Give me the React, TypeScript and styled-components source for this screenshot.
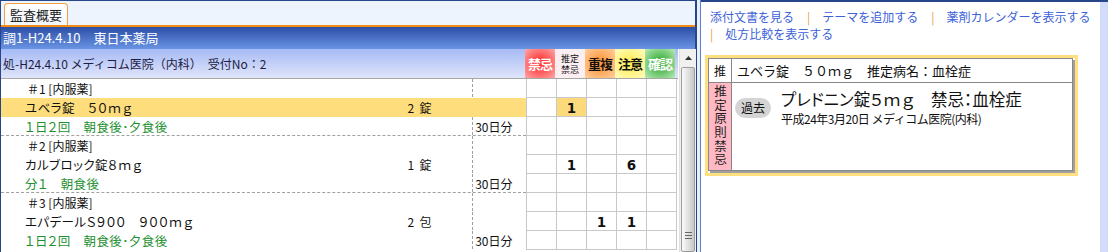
import styled, { createGlobalStyle } from "styled-components";

const GlobalStyle = createGlobalStyle`
  html, body { margin: 0; padding: 0; background: #fff; }
  body { font-family: "Noto Sans CJK JP", "Noto Sans", sans-serif; font-size: 12px; color: #111; }
`;

const Page = styled.div`
  display: flex;
  width: 1108px;
  height: 252px;
  overflow: hidden;
`;

const LeftPanel = styled.div`
  width: 694px;
  flex: none;
  display: flex;
  flex-direction: column;
  border: 1px solid #27468a;
  border-bottom: none;
  border-right-width: 2px;
  background: #fff;
`;

const TabStrip = styled.div`
  height: 24px;
  flex: none;
  display: flex;
  align-items: flex-end;
  padding-left: 3px;
  background: #eef4fd;
  border-bottom: 2px solid #f08c10;
`;

const Tab = styled.div`
  height: 21px;
  padding: 0 5px;
  line-height: 21px;
  font-size: 13px;
  color: #222;
  border: 1px solid #f0a040;
  border-bottom: none;
  border-radius: 4px 4px 0 0;
  background: linear-gradient(#ffffff, #f2f6fd);
`;

const TitleBar = styled.div`
  height: 22px;
  flex: none;
  padding-left: 2px;
  line-height: 22px;
  font-size: 13px;
  color: #fff;
  background: linear-gradient(#2c4ea6, #6a94e4);
`;

const Body = styled.div`
  flex: 1;
  display: flex;
  min-height: 0;
`;

const Content = styled.div`
  width: 677px;
  flex: none;
  display: flex;
  flex-direction: column;
`;

const SubHeader = styled.div`
  height: 29px;
  flex: none;
  display: flex;
  border-bottom: 1px solid #a8a8a8;
  background: linear-gradient(#a6baf5, #e0e5fa);
`;

const SubTitle = styled.div`
  width: 522px;
  padding-left: 2px;
  line-height: 29px;
  font-size: 12px;
  color: #1c1c44;
`;

const kinds: Record<string, { bg: string; color: string }> = {
  kinki: { bg: "radial-gradient(circle, #ff3c3c 20%, #ffa8a8 100%)", color: "#fff" },
  suitei: { bg: "#fdeef2", color: "#111" },
  jufuku: { bg: "radial-gradient(circle, #ff9a40 20%, #ffd0a0 100%)", color: "#111" },
  chui: { bg: "radial-gradient(circle, #fff060 20%, #fffcc0 100%)", color: "#111" },
  kakunin: { bg: "radial-gradient(circle, #40b040 20%, #b8ecb8 100%)", color: "#fff" },
};

const HeadCell = styled.div<{ $kind: string }>`
  width: 30px;
  display: flex;
  align-items: center;
  justify-content: center;
  text-align: center;
  font-size: ${(p) => (p.$kind === "suitei" ? "9px" : "13px")};
  line-height: ${(p) => (p.$kind === "suitei" ? "11px" : "14px")};
  font-weight: ${(p) => (p.$kind === "suitei" ? 400 : 700)};
  letter-spacing: ${(p) => (p.$kind === "suitei" ? "0" : "-1px")};
  color: ${(p) => kinds[p.$kind].color};
  background: ${(p) => kinds[p.$kind].bg};
`;

const Rows = styled.div`
  display: flex;
  flex-direction: column;
`;

const RowLine = styled.div`
  display: flex;
  height: 19px;
`;

const Main = styled.div<{ $hl?: boolean; $sep?: boolean }>`
  display: flex;
  width: 525px;
  flex: none;
  box-sizing: border-box;
  background: ${(p) => (p.$hl ? "#fedd7c" : "transparent")};
  border-bottom: 1px dashed ${(p) => (p.$sep ? "#a0a0a0" : "transparent")};
`;

const Name = styled.div<{ $green?: boolean; $head?: boolean }>`
  width: 408px;
  padding-left: ${(p) => (p.$head ? "26px" : "24px")};
  box-sizing: border-box;
  line-height: 19px;
  white-space: pre;
  font-size: ${(p) => (p.$head ? "12px" : "12.5px")};
  font-feature-settings: ${(p) => (p.$head ? "normal" : '"palt"')};
  letter-spacing: ${(p) => (p.$head ? "0" : "0.4px")};
  color: ${(p) => (p.$green ? "#1e9030" : "#111")};
`;

const Amount = styled.div`
  width: 65px;
  line-height: 19px;
  white-space: pre;
`;

const Days = styled.div<{ $hl?: boolean }>`
  width: 51px;
  padding-left: 2px;
  line-height: 19px;
  border-left: 1px dashed ${(p) => (p.$hl ? "transparent" : "#a0a0a0")};
`;

const Cells = styled.div`
  display: flex;
  border-left: 1px solid #c8c8c8;
`;

const Cell = styled.div<{ $hl?: boolean }>`
  width: 29px;
  height: 18px;
  border-right: 1px solid #c8c8c8;
  border-bottom: 1px solid #c8c8c8;
  text-align: center;
  line-height: 21px;
  font-family: "DejaVu Sans", sans-serif;
  font-weight: 700;
  font-size: 13.5px;
  background: ${(p) => (p.$hl ? "#fcd97a" : "#fff")};
`;

const ScrollBar = styled.div`
  width: 16px;
  flex: none;
  margin-left: 1px;
  display: flex;
  flex-direction: column;
  background: #f0f0f0;
  border-left: 1px solid #e0e0e0;
`;

const ScrollArrow = styled.div`
  height: 17px;
  display: flex;
  align-items: center;
  justify-content: center;
`;

const Thumb = styled.div`
  flex: 1;
  margin: 1px 1px 0;
  border: 1px solid #9c9c9c;
  border-radius: 2px;
  background: linear-gradient(90deg, #fafafa, #dcdcdc 60%, #c8c8c8);
  display: flex;
  align-items: flex-end;
  justify-content: center;
  padding-bottom: 12px;
`;

const Grip = styled.div`
  width: 7px;
  height: 7px;
  background: repeating-linear-gradient(#666 0 1px, transparent 1px 3px);
`;

const Divider = styled.div`
  width: 3px;
  flex: none;
  background: #e8eefa;
  border-right: 1px solid #5b80c8;
`;

const RightPanel = styled.div`
  flex: 1;
  display: flex;
  border-top: 2px solid #27468a;
  box-sizing: border-box;
`;

const RightMain = styled.div`
  flex: 1;
  padding: 6px 4px 0 4px;
  background: #fff;
`;

const RightEdge = styled.div`
  width: 8px;
  background: #d0dcfa;
`;

const Links = styled.div`
  padding-left: 5px;
  line-height: 17px;
  font-size: 12px;
  color: #3c62d8;
`;

const Sep = styled.span<{ $first?: boolean }>`
  color: #e8a040;
  margin: 0 12px 0 ${(p) => (p.$first ? "0" : "13px")};
`;

const Card = styled.div`
  margin-top: 13px;
  width: 367px;
  border: 3px solid #ffdf80;
`;

const CardInner = styled.div`
  display: grid;
  grid-template-columns: 23px 1fr;
  grid-template-rows: 24px 87px;
  border: 1px solid #888;
  box-shadow: 2px 2px 0 #a0a0a0;
  margin-right: 2px;
  margin-bottom: 2px;
`;

const Mark = styled.div`
  border-right: 1px solid #888;
  border-bottom: 1px solid #888;
  text-align: center;
  line-height: 24px;
  font-size: 12px;
`;

const TopText = styled.div`
  border-bottom: 1px solid #888;
  padding-left: 5px;
  line-height: 24px;
  font-size: 13px;
  white-space: pre;
`;

const VertLabel = styled.div`
  background: #ffb8c4;
  border-right: 1px solid #888;
  writing-mode: vertical-rl;
  text-orientation: upright;
  font-size: 12.5px;
  line-height: 22px;
  letter-spacing: 1.2px;
  padding-top: 2px;
  color: #222;
`;

const Detail = styled.div`
  display: flex;
  gap: 10px;
  padding: 5px 0 0 3px;
`;

const Badge = styled.div`
  margin-top: 10px;
  height: 20px;
  padding: 0 6px;
  border-radius: 10px;
  background: #d4d4d4;
  line-height: 20px;
  font-size: 12px;
  align-self: flex-start;
`;

const DrugBig = styled.div`
  font-size: 16.5px;
  line-height: 22px;
  white-space: pre;
  font-feature-settings: "palt";
`;

const DrugSub = styled.div`
  font-size: 12px;
  line-height: 18px;
  letter-spacing: -0.5px;
`;

type Row = { name: string; amount?: string; days?: string; green?: boolean; head?: boolean; hl?: boolean; cells: (string | null)[]; cellHl?: number };

const groups: Row[][] = [
  [
    { name: "＃1 [内服薬]", head: true, cells: [] },
    { name: "ユベラ錠　５０ｍｇ", amount: "2  錠", hl: true, cells: [null, "1"], cellHl: 1 },
    { name: "１日２回　朝食後･夕食後", green: true, days: "30日分", cells: [] },
  ],
  [
    { name: "＃2 [内服薬]", head: true, cells: [] },
    { name: "カルブロック錠８ｍｇ", amount: "1  錠", cells: [null, "1", null, "6"] },
    { name: "分１　朝食後", green: true, days: "30日分", cells: [] },
  ],
  [
    { name: "＃3 [内服薬]", head: true, cells: [] },
    { name: "エパデールＳ９００　９００ｍｇ", amount: "2  包", cells: [null, null, "1", "1"] },
    { name: "１日２回　朝食後･夕食後", green: true, days: "30日分", cells: [] },
  ],
];

export default function App() {
  return (
    <Page>
      <GlobalStyle />
      <LeftPanel>
        <TabStrip>
          <Tab>監査概要</Tab>
        </TabStrip>
        <TitleBar>調1-H24.4.10　東日本薬局</TitleBar>
        <Body>
          <Content>
            <SubHeader>
              <SubTitle>処-H24.4.10 メディコム医院（内科）　受付No：2</SubTitle>
              <HeadCell $kind="kinki">禁忌</HeadCell>
              <HeadCell $kind="suitei">推定<br />禁忌</HeadCell>
              <HeadCell $kind="jufuku">重複</HeadCell>
              <HeadCell $kind="chui">注意</HeadCell>
              <HeadCell $kind="kakunin">確認</HeadCell>
            </SubHeader>
            <Rows>
              {groups.map((g, gi) =>
                g.map((r, ri) => (
                  <RowLine key={`${gi}-${ri}`}>
                    <Main $hl={r.hl} $sep={ri === 2 && gi < groups.length - 1}>
                      <Name $green={r.green} $head={r.head}>{r.name}</Name>
                      <Amount>{r.amount}</Amount>
                      <Days $hl={r.hl}>{r.days}</Days>
                    </Main>
                    <Cells>
                      {[0, 1, 2, 3, 4].map((c) => (
                        <Cell key={c} $hl={r.cellHl === c}>{r.cells[c] ?? ""}</Cell>
                      ))}
                    </Cells>
                  </RowLine>
                ))
              )}
            </Rows>
          </Content>
          <ScrollBar>
            <ScrollArrow>
              <svg width="7" height="4" viewBox="0 0 7 4"><path d="M0 4 L3.5 0 L7 4 Z" fill="#333" /></svg>
            </ScrollArrow>
            <Thumb>
              <Grip />
            </Thumb>
          </ScrollBar>
        </Body>
      </LeftPanel>
      <Divider />
      <RightPanel>
        <RightMain>
          <Links>
            添付文書を見る<Sep>|</Sep>テーマを追加する<Sep>|</Sep>薬剤カレンダーを表示する
            <br />
            <Sep $first>|</Sep>処方比較を表示する
          </Links>
          <Card>
            <CardInner>
              <Mark>推</Mark>
              <TopText>ユベラ錠　５０ｍｇ　推定病名：血栓症</TopText>
              <VertLabel>推定原則禁忌</VertLabel>
              <Detail>
                <Badge>過去</Badge>
                <div>
                  <DrugBig>プレドニン錠５ｍｇ　禁忌：血栓症</DrugBig>
                  <DrugSub>平成24年3月20日 メディコム医院(内科)</DrugSub>
                </div>
              </Detail>
            </CardInner>
          </Card>
        </RightMain>
        <RightEdge />
      </RightPanel>
    </Page>
  );
}
